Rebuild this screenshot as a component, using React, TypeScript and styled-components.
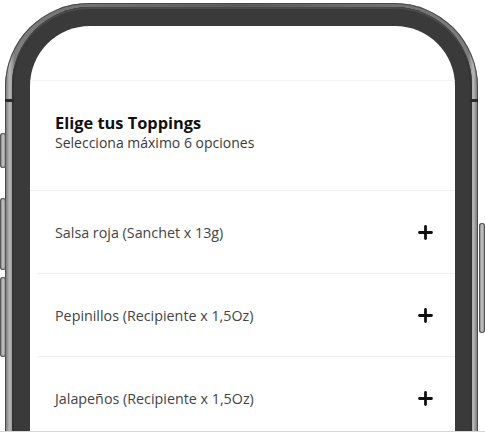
import styled, { createGlobalStyle } from 'styled-components';

const GlobalStyle = createGlobalStyle`
  html, body {
    margin: 0;
    padding: 0;
    background: #ffffff;
  }
  body {
    font-family: "Open Sans", Lato, sans-serif;
  }
`;

const Stage = styled.div`
  position: relative;
  width: 485px;
  height: 431px;
  overflow: hidden;
  background: #ffffff;
  border-bottom: 1px solid #d6d6d6;
`;

const Phone = styled.div`
  position: relative;
  margin: 3px 0 0 5px;
  width: 473px;
  height: 520px;
  box-sizing: border-box;
  padding: 4px 6px 0 7px;
  border-radius: 84px 84px 0 0;
  background: linear-gradient(90deg, #6e6e6e 0%, #b9b9b9 1%, #7d7d7d 2%, #5a5a5a 50%, #7d7d7d 98%, #b9b9b9 99%, #6e6e6e 100%);
  box-shadow: inset 0 0 0 1px #4a4a4a;
`;

const Bezel = styled.div`
  height: 100%;
  box-sizing: border-box;
  padding: 19px 17px 0 18px;
  border-radius: 78px 78px 0 0;
  background: #3a3a3a;
  box-shadow: inset 0 2px 0 #4a4a4a, inset 2px 0 0 #333, inset -2px 0 0 #333;
`;

const Screen = styled.div`
  height: 100%;
  background: #ffffff;
  border-radius: 60px 60px 0 0;
  overflow: hidden;
`;

// side keys stick out past the frame edge
const ButtonRail = styled.div<{ $side: 'left' | 'right' }>`
  position: absolute;
  top: ${(p) => (p.$side === 'left' ? 130 : 220)}px;
  ${(p) => (p.$side === 'left' ? 'left: -5px;' : 'right: -7px;')}
  display: flex;
  flex-direction: column;
`;

const SideButton = styled.div<{ $height: number; $gap?: number }>`
  width: 6px;
  height: ${(p) => p.$height}px;
  margin-top: ${(p) => p.$gap ?? 0}px;
  border-radius: 3px;
  background: linear-gradient(90deg, #6a6a6a, #c9c9c9 50%, #7a7a7a);
  box-shadow: inset 0 0 0 1px #555;
`;

const Bands = styled.div`
  position: absolute;
  top: 96px;
  left: 0;
  right: 0;
  display: flex;
  justify-content: space-between;
`;

const Band = styled.div`
  width: 8px;
  height: 3px;
  background: #2a2a2a;
`;

const StatusArea = styled.div`
  height: 54px;
  border-bottom: 1px solid #f3f3f3;
`;

const Header = styled.div`
  height: 110px;
  box-sizing: border-box;
  padding: 31px 25px 0;
  border-bottom: 1px solid #f0f0f0;
`;

const Title = styled.h2`
  margin: 0;
  font-size: 16.4px;
  font-weight: 700;
  line-height: 21px;
  color: #111111;
`;

const Subtitle = styled.p`
  margin: 1px 0 0;
  font-size: 14px;
  line-height: 18px;
  color: #3a3a3a;
`;

const List = styled.div`
  display: flex;
  flex-direction: column;
  padding-left: 7px;
`;

const Row = styled.div`
  display: flex;
  align-items: center;
  justify-content: space-between;
  height: 82px;
  padding: 0 18px;
  border-bottom: 1px solid #efefef;
`;

const RowLabel = styled.span`
  font-size: 14.3px;
  color: #444444;
`;

const AddButton = styled.button`
  display: flex;
  align-items: center;
  justify-content: center;
  width: 24px;
  height: 24px;
  padding: 0;
  border: none;
  background: none;
  cursor: pointer;
`;

const toppings = [
  'Salsa roja (Sanchet x 13g)',
  'Pepinillos (Recipiente x 1,5Oz)',
  'Jalapeños (Recipiente x 1,5Oz)',
];

function PlusIcon() {
  return (
    <svg width="15" height="15" viewBox="0 0 15 15">
      <path d="M7.5 1.5v12M1.5 7.5h12" stroke="#111" strokeWidth="2.8" strokeLinecap="round" />
    </svg>
  );
}

export default function App() {
  return (
    <Stage>
      <GlobalStyle />
      <Phone>
        <ButtonRail $side="left">
          <SideButton $height={35} />
          <SideButton $height={72} $gap={30} />
          <SideButton $height={80} $gap={7} />
        </ButtonRail>
        <ButtonRail $side="right">
          <SideButton $height={110} />
        </ButtonRail>
        <Bands>
          <Band />
          <Band />
        </Bands>
        <Bezel>
          <Screen>
            <StatusArea />
            <Header>
              <Title>Elige tus Toppings</Title>
              <Subtitle>Selecciona máximo 6 opciones</Subtitle>
            </Header>
            <List>
              {toppings.map((t) => (
                <Row key={t}>
                  <RowLabel>{t}</RowLabel>
                  <AddButton aria-label={`Agregar ${t}`}>
                    <PlusIcon />
                  </AddButton>
                </Row>
              ))}
            </List>
          </Screen>
        </Bezel>
      </Phone>
    </Stage>
  );
}
